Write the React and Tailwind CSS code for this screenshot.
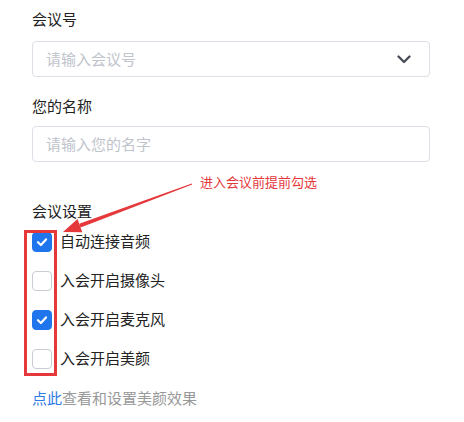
import { useState } from "react";

const font = { fontFamily: '"Noto Sans CJK SC", "Noto Sans", sans-serif' };

function Box({ checked, onClick }) {
  return (
    <button
      type="button"
      onClick={onClick}
      className={
        "flex h-5 w-5 items-center justify-center rounded-[4px] border " +
        (checked ? "border-[#1f75ec] bg-[#1f75ec]" : "border-[#c9cdd4] bg-white")
      }
    >
      {checked && (
        <svg width="12" height="12" viewBox="0 0 12 12">
          <polyline points="2,6.2 4.9,9 10,3.4" fill="none" stroke="#fff" strokeWidth="2.2" strokeLinecap="round" strokeLinejoin="round" />
        </svg>
      )}
    </button>
  );
}

export default function App() {
  const [opts, setOpts] = useState([
    { label: "自动连接音频", on: true },
    { label: "入会开启摄像头", on: false },
    { label: "入会开启麦克风", on: true },
    { label: "入会开启美颜", on: false },
  ]);

  return (
    <div className="relative h-[422px] w-[464px] overflow-hidden bg-white" style={font}>
      <div className="px-8 pt-[9px]">
        <div className="h-5 text-[15px] leading-5 text-[#222]">会议号</div>
        <div className="mt-3 flex h-9 w-[398px] items-center justify-between rounded-[4px] border border-[#dcdfe6] pl-[13px] pr-[18px]">
          <span className="text-[15px] text-[#c0c4cc]">请输入会议号</span>
          <svg width="14" height="9" viewBox="0 0 14 9">
            <polyline points="1.5,1.5 7,7 12.5,1.5" fill="none" stroke="#4a4f57" strokeWidth="2.4" strokeLinecap="round" strokeLinejoin="round" />
          </svg>
        </div>

        <div className="mt-[19px] h-5 text-[15px] leading-5 text-[#222]">您的名称</div>
        <div className="mt-[10px] flex h-9 w-[398px] items-center rounded-[4px] border border-[#dcdfe6] pl-[13px]">
          <span className="text-[15px] text-[#c0c4cc]">请输入您的名字</span>
        </div>

        <div className="mt-[39px] h-[21px] text-[15px] leading-5 text-[#222]">会议设置</div>
        <div className="relative">
          {opts.map((o, i) => (
            <div key={o.label} className="flex h-[39px] items-center gap-2">
              <Box
                checked={o.on}
                onClick={() => setOpts(opts.map((x, j) => (j === i ? { ...x, on: !x.on } : x)))}
              />
              <span className="text-[15px] text-[#222]">{o.label}</span>
            </div>
          ))}
          <div className="pointer-events-none absolute left-[-8px] top-[8px] h-[146px] w-[33px] border-[3px] border-[#e5383b]" />
        </div>

        <div className="mt-[10px] h-5 text-[15px] leading-5">
          <span className="text-[#2d7be5]">点此</span>
          <span className="text-[#999]">查看和设置美颜效果</span>
        </div>
      </div>

      <div className="absolute left-[200px] top-[173px] text-[13px] leading-[18px] text-[#e5383b]">进入会议前提前勾选</div>
      <svg className="pointer-events-none absolute left-0 top-0" width="464" height="422">
        <polygon points="192.2,184.5 191.8,183.5 79.2,223.8 80.6,227.6" fill="#e5383b" />
        <polygon points="63,232 82.3,232.3 77.5,219.1" fill="#e5383b" />
      </svg>
    </div>
  );
}
